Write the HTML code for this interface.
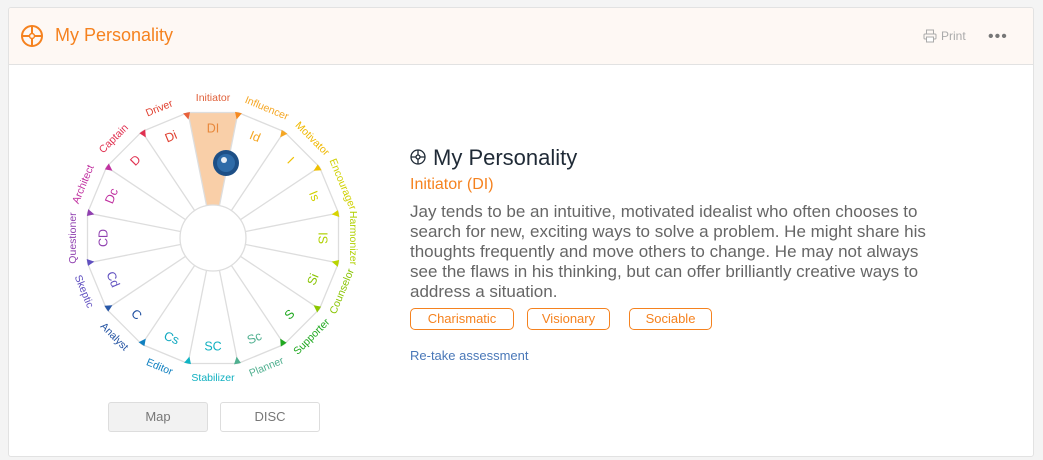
<!DOCTYPE html>
<html><head><meta charset="utf-8"><style>
html,body{margin:0;padding:0;width:1043px;height:460px;overflow:hidden;background:#f4f4f4;font-family:"Liberation Sans",sans-serif}
.card{position:absolute;left:8px;top:7px;width:1024px;height:448px;background:#fff;border:1px solid #e2e2e2;border-radius:3px;overflow:hidden}
.hdr{position:absolute;left:0;top:0;width:1024px;height:56px;background:#fef8f4;border-bottom:1px solid #e2e2e2}
.htitle{position:absolute;left:46px;top:17px;font-size:18px;color:#f5821f}
.print{position:absolute;left:915px;top:21px;font-size:12px;color:#aaa}
.dots{position:absolute;left:979px;top:20px;font-size:16px;color:#777;letter-spacing:1px}
.t1{position:absolute;top:145px;font-size:22px;color:#1f2a36}
.t2{position:absolute;top:176px;font-size:16px;color:#f5821f}
.body{position:absolute;top:202px;font-size:17px;line-height:20px;color:#666;white-space:nowrap}
.tag{position:absolute;top:308px;height:20px;border:1px solid #f5821f;border-radius:5px;color:#f5821f;font-size:13px;line-height:20px;text-align:center}
.retake{position:absolute;top:348px;font-size:13px;color:#4a78b8}
.btn{position:absolute;width:98px;height:28px;border:1px solid #ddd;border-radius:3px;font-size:13px;line-height:28px;text-align:center;color:#777}
</style></head><body>
<div class="card">
<div class="hdr">
<svg style="position:absolute;left:11px;top:16px" width="24" height="24" viewBox="0 0 24 24"><circle cx="12" cy="12" r="10" fill="none" stroke="#f5821f" stroke-width="2"/><line x1="12" y1="2" x2="12" y2="22" stroke="#f5821f" stroke-width="2"/><line x1="2" y1="12" x2="22" y2="12" stroke="#f5821f" stroke-width="2"/><circle cx="12" cy="12" r="2.5" fill="#fef8f4" stroke="#f5821f" stroke-width="1.5"/></svg>
<div class="htitle">My Personality</div>
<svg style="position:absolute;left:914px;top:21px" width="14" height="14" viewBox="0 0 14 14"><rect x="3.5" y="1" width="7" height="4" fill="none" stroke="#aaa"/><rect x="1" y="5" width="12" height="5" rx="1" fill="none" stroke="#aaa"/><rect x="3.5" y="8" width="7" height="5" fill="#fff" stroke="#aaa"/></svg>
<div class="print" style="left:932px">Print</div>
<div class="dots">•••</div>
</div>
</div>
<svg style="position:absolute;left:0;top:0" width="1043" height="460">
<g font-family="Liberation Sans, sans-serif" text-anchor="middle" dominant-baseline="middle">
<polygon points="188,112.5 238,112.5 219.4,205.6 206.6,205.6" fill="#f9cfa8"/>
<g stroke="#dddddd" stroke-width="1.3" fill="none">
<polygon points="238,112.5 284.1,131.6 319.4,166.9 338.5,213 338.5,263 319.4,309.1 284.1,344.4 238,363.5 188,363.5 141.9,344.4 106.6,309.1 87.5,263 87.5,213 106.6,166.9 141.9,131.6 188,112.5"/>
<path d="M213 238L238 112.5M213 238L284.1 131.6M213 238L319.4 166.9M213 238L338.5 213M213 238L338.5 263M213 238L319.4 309.1M213 238L284.1 344.4M213 238L238 363.5M213 238L188 363.5M213 238L141.9 344.4M213 238L106.6 309.1M213 238L87.5 263M213 238L87.5 213M213 238L106.6 166.9M213 238L141.9 131.6M213 238L188 112.5"/>
</g>
<circle cx="213" cy="238" r="33" fill="#fff" stroke="#dddddd" stroke-width="1.3"/>
<g>
<path transform="rotate(-11.25 213 238)" d="M208 110L215 110L212 117Z" fill="#e8603a"/>
<path transform="rotate(11.25 213 238)" d="M210 110L217 110L213 117Z" fill="#f5891f"/>
<path transform="rotate(33.75 213 238)" d="M210 110L217 110L213 117Z" fill="#f5a623"/>
<path transform="rotate(56.25 213 238)" d="M210 110L217 110L213 117Z" fill="#f0c000"/>
<path transform="rotate(78.75 213 238)" d="M210 110L217 110L213 117Z" fill="#d8d400"/>
<path transform="rotate(101.25 213 238)" d="M210 110L217 110L213 117Z" fill="#b8d400"/>
<path transform="rotate(123.75 213 238)" d="M210 110L217 110L213 117Z" fill="#8cc800"/>
<path transform="rotate(146.25 213 238)" d="M210 110L217 110L213 117Z" fill="#20a820"/>
<path transform="rotate(168.75 213 238)" d="M210 110L217 110L213 117Z" fill="#50b090"/>
<path transform="rotate(191.25 213 238)" d="M210 110L217 110L213 117Z" fill="#10b4c4"/>
<path transform="rotate(213.75 213 238)" d="M210 110L217 110L213 117Z" fill="#1080c0"/>
<path transform="rotate(236.25 213 238)" d="M210 110L217 110L213 117Z" fill="#2858a8"/>
<path transform="rotate(258.75 213 238)" d="M210 110L217 110L213 117Z" fill="#6050c0"/>
<path transform="rotate(281.25 213 238)" d="M210 110L217 110L213 117Z" fill="#9040b0"/>
<path transform="rotate(303.75 213 238)" d="M210 110L217 110L213 117Z" fill="#c030a0"/>
<path transform="rotate(326.25 213 238)" d="M210 110L217 110L213 117Z" fill="#e03050"/>
</g>
<g font-size="10.5">
<text x="213" y="98" fill="#e0603a">Initiator</text>
<text x="213" y="98" transform="rotate(22.5 213 238)" fill="#f5a623">Influencer</text>
<text x="213" y="98" transform="rotate(45 213 238)" fill="#f0b800">Motivator</text>
<text x="213" y="98" transform="rotate(67.5 213 238)" fill="#d0d000">Encourager</text>
<text x="213" y="98" transform="rotate(90 213 238)" fill="#b0d000">Harmonizer</text>
<text x="213" y="378" transform="rotate(-67.5 213 238)" fill="#88c400">Counselor</text>
<text x="213" y="378" transform="rotate(-45 213 238)" fill="#20a820">Supporter</text>
<text x="213" y="378" transform="rotate(-22.5 213 238)" fill="#50b090">Planner</text>
<text x="213" y="378" fill="#10b0c0">Stabilizer</text>
<text x="213" y="378" transform="rotate(22.5 213 238)" fill="#1080c0">Editor</text>
<text x="213" y="378" transform="rotate(45 213 238)" fill="#2050a0">Analyst</text>
<text x="213" y="378" transform="rotate(67.5 213 238)" fill="#6050c0">Skeptic</text>
<text x="213" y="98" transform="rotate(-90 213 238)" fill="#9040b0">Questioner</text>
<text x="213" y="98" transform="rotate(-67.5 213 238)" fill="#c030a0">Architect</text>
<text x="213" y="98" transform="rotate(-45 213 238)" fill="#e03050">Captain</text>
<text x="213" y="98" transform="rotate(-22.5 213 238)" fill="#e04030">Driver</text>
</g>
<g font-size="12.5">
<text x="213" y="129" fill="#e8873a">DI</text>
<text x="213" y="129" transform="rotate(22.5 213 238)" fill="#f5a623">Id</text>
<text x="213" y="129" transform="rotate(45 213 238)" fill="#f0c000">I</text>
<text x="213" y="129" transform="rotate(67.5 213 238)" fill="#d0d000">Is</text>
<text x="213" y="129" transform="rotate(90 213 238)" fill="#b0d000">IS</text>
<text x="213" y="347" transform="rotate(-67.5 213 238)" fill="#88c400">Si</text>
<text x="213" y="347" transform="rotate(-45 213 238)" fill="#20a820">S</text>
<text x="213" y="347" transform="rotate(-22.5 213 238)" fill="#50b090">Sc</text>
<text x="213" y="347" fill="#10b0c0">SC</text>
<text x="213" y="347" transform="rotate(22.5 213 238)" fill="#10a8c0">Cs</text>
<text x="213" y="347" transform="rotate(45 213 238)" fill="#2050a0">C</text>
<text x="213" y="347" transform="rotate(67.5 213 238)" fill="#6050c0">Cd</text>
<text x="213" y="129" transform="rotate(-90 213 238)" fill="#9040b0">CD</text>
<text x="213" y="129" transform="rotate(-67.5 213 238)" fill="#c030a0">Dc</text>
<text x="213" y="129" transform="rotate(-45 213 238)" fill="#e03050">D</text>
<text x="213" y="129" transform="rotate(-22.5 213 238)" fill="#e04030">Di</text>
</g>
<circle cx="226" cy="163" r="13" fill="#1d4f86"/>
<circle cx="226" cy="163" r="9" fill="#3b7fc0" opacity=".6"/>
<circle cx="224" cy="160" r="3" fill="#e8eef5"/>
<g transform="translate(418,157)" stroke="#1f2a36" stroke-width="1.3" fill="none"><circle r="7"/><path d="M0 -7V7M-7 0H7"/><circle r="2" fill="#fff"/></g>
</g>
</svg>
<div class="t1" style="left:433px">My Personality</div>
<div class="t2" style="left:410px">Initiator (DI)</div>
<div class="body" style="left:410px">Jay tends to be an intuitive, motivated idealist who often chooses to<br>search for new, exciting ways to solve a problem. He might share his<br>thoughts frequently and move others to change. He may not always<br>see the flaws in his thinking, but can offer brilliantly creative ways to<br>address a situation.</div>
<div class="tag" style="left:410px;width:102px">Charismatic</div>
<div class="tag" style="left:527px;width:81px">Visionary</div>
<div class="tag" style="left:629px;width:81px">Sociable</div>
<div class="retake" style="left:410px">Re-take assessment</div>
<div class="btn" style="left:108px;top:402px;background:#f2f2f2">Map</div>
<div class="btn" style="left:220px;top:402px;background:#fff">DISC</div>
</body></html>
